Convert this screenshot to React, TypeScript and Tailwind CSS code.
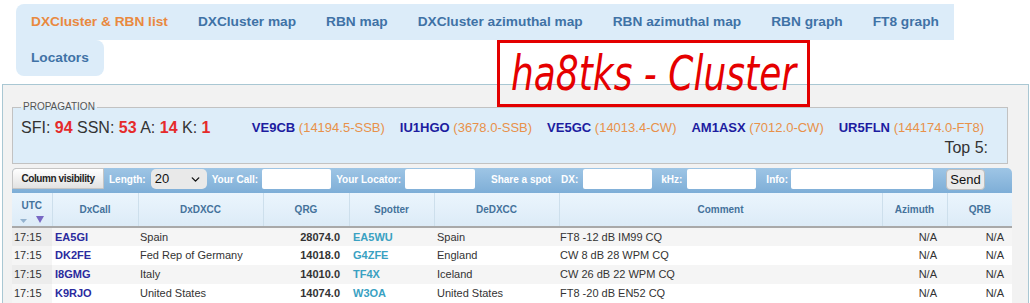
import { ChevronDown } from "lucide-react";

const tabs = [
  "DXCluster & RBN list",
  "DXCluster map",
  "RBN map",
  "DXCluster azimuthal map",
  "RBN azimuthal map",
  "RBN graph",
  "FT8 graph",
  "Locators",
];

const spots = [
  { call: "VE9CB", qrg: "14194.5-SSB" },
  { call: "IU1HGO", qrg: "3678.0-SSB" },
  { call: "VE5GC", qrg: "14013.4-CW" },
  { call: "AM1ASX", qrg: "7012.0-CW" },
  { call: "UR5FLN", qrg: "144174.0-FT8" },
];

const rows = [
  ["17:15", "EA5GI", "Spain", "28074.0", "EA5WU", "Spain", "FT8 -12 dB IM99 CQ"],
  ["17:15", "DK2FE", "Fed Rep of Germany", "14018.0", "G4ZFE", "England", "CW 8 dB 28 WPM CQ"],
  ["17:15", "I8GMG", "Italy", "14010.0", "TF4X", "Iceland", "CW 26 dB 22 WPM CQ"],
  ["17:15", "K9RJO", "United States", "14074.0", "W3OA", "United States", "FT8 -20 dB EN52 CQ"],
];

const cols = [40, 86, 125, 86, 85, 125, 323, 65, 65];
const heads = ["DxCall", "DxDXCC", "QRG", "Spotter", "DeDXCC", "Comment", "Azimuth", "QRB"];

export default function App() {
  return (
    <div className="relative h-[303px] overflow-hidden bg-white font-['Liberation_Sans',Arial,sans-serif]">
      {/* Tabs */}
      <ul className="ml-4 mt-1 flex flex-wrap">
        {tabs.map((t, i) => (
          <li
            key={t}
            className={
              "flex h-[36px] items-center bg-[#dcecf9] px-[15px] text-[13.7px] font-bold " +
              (i === 0 ? "rounded-tl-[8px] text-[#e9893f] " : "text-[#3f72a6] ") +
              (t === "Locators" ? "rounded-b-[8px] rounded-tr-[8px]" : "")
            }
          >
            {t}
          </li>
        ))}
      </ul>

      {/* Title overlay */}
      <div className="absolute left-[497px] top-[40px] z-10 flex h-[67px] w-[313px] items-center justify-center border-[3px] border-[#e30000]">
        <span className="inline-block origin-center scale-y-[1.35] font-['DejaVu_Sans',sans-serif] text-[36px] italic leading-none text-[#e50000]">
          ha8tks - Cluster
        </span>
      </div>

      {/* Panel */}
      <div className="ml-[2px] mr-[1px] mt-[8px] border border-[#a9c7d3] bg-[#f2f2f2] pl-[9px] pr-[16px] pt-[16px]">
        <fieldset className="mr-[4px] border border-[#c2c2c2] bg-[#ddedf9] pb-[5px] pl-[8px] pr-[19px]">
          <legend className="px-[2px] text-[10px] leading-[12px] text-[#555]">PROPAGATION</legend>
          <div className="mt-[5px] flex h-[20px] items-center justify-between">
            <div className="text-[16px] text-[#333]">
              SFI: <b className="text-[#e52b2b]">94</b> SSN: <b className="text-[#e52b2b]">53</b> A:{" "}
              <b className="text-[#e52b2b]">14</b> K: <b className="text-[#e52b2b]">1</b>
            </div>
            <div className="mr-[4px] flex gap-[15px] text-[13px]">
              {spots.map((s) => (
                <span key={s.call}>
                  <b className="text-[#1c1ca0]">{s.call}</b>{" "}
                  <span className="text-[#e8914a]">({s.qrg})</span>
                </span>
              ))}
            </div>
          </div>
          <div className="flex h-[20px] items-center justify-end text-[16px] text-[#333]">Top 5:</div>
        </fieldset>

        {/* Toolbar */}
        <div className="mt-[4px] flex h-[25px] items-center rounded-t-[5px] bg-linear-to-b from-[#9ec5e5] to-[#7eaed7] pb-[3px] text-[10px] font-bold text-white">
          <button className="h-[21px] w-[92px] self-start rounded-tl-[4px] border border-[#c5c5c5] bg-linear-to-b from-[#ffffff] to-[#e2e2e2] text-[10px] font-bold tracking-[-0.4px] text-[#222]">
            Column visibility
          </button>
          <span className="ml-[5px]">Length:</span>
          <div className="ml-[5px] flex h-[20px] w-[56px] items-center justify-between rounded-[5px] bg-[#e9e9e9] pl-[4px] pr-[5px] text-[13px] font-normal text-[#111]">
            20
            <ChevronDown className="h-[13px] w-[13px]" strokeWidth={2.5} />
          </div>
          <span className="ml-[5px]">Your Call:</span>
          <input className="ml-[4px] h-[20px] w-[69px] rounded-[2px] bg-white outline-none" />
          <span className="ml-[5px]">Your Locator:</span>
          <input className="ml-[4px] h-[20px] w-[70px] rounded-[2px] bg-white outline-none" />
          <span className="ml-[16px]">Share a spot</span>
          <span className="ml-[10px]">DX:</span>
          <input className="ml-[5px] h-[20px] w-[69px] rounded-[2px] bg-white outline-none" />
          <span className="ml-[9px]">kHz:</span>
          <input className="ml-[5px] h-[20px] w-[69px] rounded-[2px] bg-white outline-none" />
          <span className="ml-[10px]">Info:</span>
          <input className="ml-[3px] h-[20px] w-[142px] rounded-[2px] bg-white outline-none" />
          <button className="ml-[13px] h-[21px] w-[39px] rounded-[4px] border border-[#bdbdbd] bg-[#ebebeb] text-[13px] font-normal text-[#111]">
            Send
          </button>
        </div>

        {/* Table */}
        <table className="w-[1000px] table-fixed border-collapse text-[11px] text-[#333]">
          <colgroup>
            {cols.map((w, i) => (
              <col key={i} style={{ width: w }} />
            ))}
          </colgroup>
          <thead>
            <tr className="bg-linear-to-b from-[#ebf5fd] to-[#dcebf7] text-[10px] font-bold text-[#44729b]">
              <th className="h-[34px] border-b-2 border-[#a9a9a9] p-0 align-middle">
                <div className="flex flex-col items-center pt-[1px]">
                  <span>UTC</span>
                  <div className="mt-[3px] flex w-full items-end justify-between px-[8px]">
                    <svg width="7" height="4" viewBox="0 0 7 4">
                      <path d="M0 0h7L3.5 4z" fill="#94b3cf" />
                    </svg>
                    <svg width="8" height="7" viewBox="0 0 8 7">
                      <path d="M0 0h8L4 7z" fill="#7868c4" />
                    </svg>
                  </div>
                </div>
              </th>
              {heads.map((h) => (
                <th key={h} className="h-[34px] border-b-2 border-l border-[#a9a9a9] border-l-[#cddfec] p-0 align-middle">
                  {h}
                </th>
              ))}
            </tr>
          </thead>
          <tbody>
            {rows.map((r, i) => (
              <tr key={i} className={i % 2 === 0 ? "bg-[#f5f5f5]" : "bg-white"}>
                <td className={"h-[19px] pl-[2px] " + (i % 2 === 0 ? "bg-[#ececec]" : "bg-[#f5f5f5]")}>{r[0]}</td>
                <td className="pl-[3px] font-bold text-[#2a2a9e]">{r[1]}</td>
                <td className="pl-[2px]">{r[2]}</td>
                <td className="pr-[9px] text-right font-bold">{r[3]}</td>
                <td className="pl-[4px] font-bold text-[#3aa1c2]">{r[4]}</td>
                <td className="pl-[3px]">{r[5]}</td>
                <td className="pl-[1px]">{r[6]}</td>
                <td className="pr-[10px] text-right">N/A</td>
                <td className="pr-[8px] text-right">N/A</td>
              </tr>
            ))}
          </tbody>
        </table>
      </div>
    </div>
  );
}
